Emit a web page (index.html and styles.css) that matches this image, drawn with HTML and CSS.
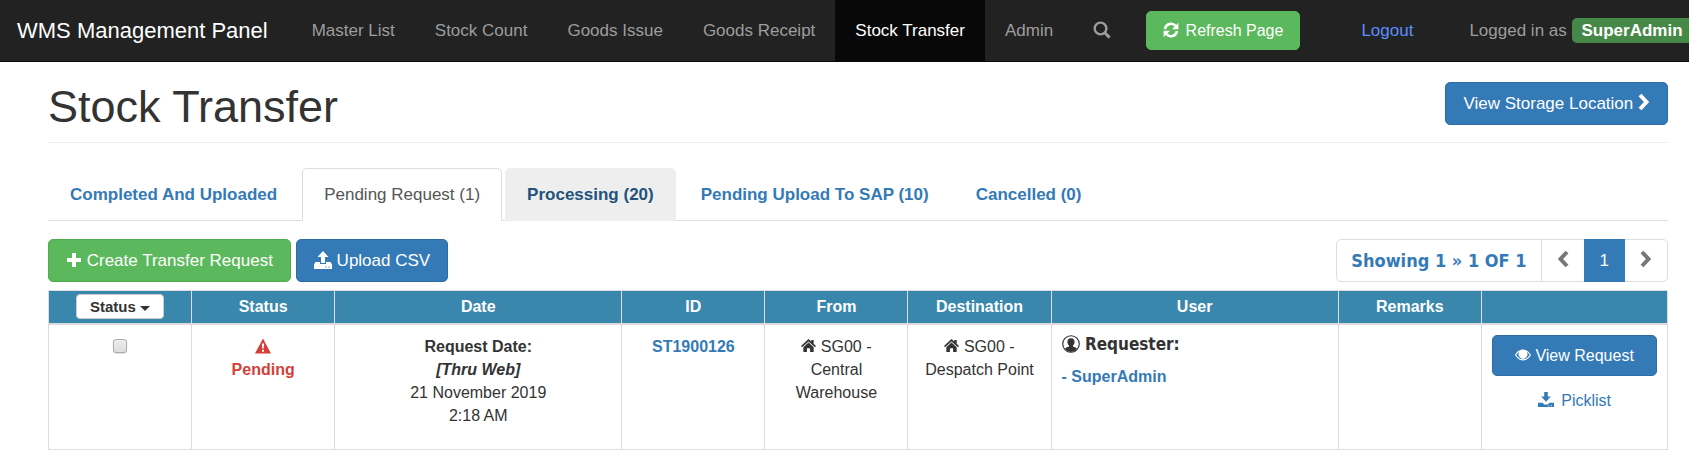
FILE: index.html
```html
<!DOCTYPE html>
<html lang="en">
<head>
    <meta charset="UTF-8">
    <title>Stock Transfer</title>
    <link rel="stylesheet" href="styles.css">
</head>
<body>
    <!-- Top navigation -->
    <nav class="navbar">
        <a class="brand" href="#">WMS Management Panel</a>
        <ul class="nav">
            <li><a href="#">Master List</a></li>
            <li><a href="#">Stock Count</a></li>
            <li><a href="#">Goods Issue</a></li>
            <li><a href="#">Goods Receipt</a></li>
            <li class="active"><a href="#">Stock Transfer</a></li>
            <li><a href="#">Admin</a></li>
            <li>
                <a href="#" aria-label="Search">
                    <svg class="icon icon-md" viewBox="0 0 16 16"><circle cx="6.7" cy="6.7" r="5.2" fill="none" stroke="currentColor" stroke-width="2.1"/><path d="M10.5 10.5l4.3 4.3" stroke="currentColor" stroke-width="2.6"/></svg>
                </a>
            </li>
        </ul>
        <button class="btn btn-refresh" type="button">
            <svg class="icon" viewBox="0 0 16 16"><path d="M2 7a6 6 0 0 1 10.6-3" fill="none" stroke="currentColor" stroke-width="2.5"/><path d="M15.4.8v6.4H9z"/><path d="M14 9a6 6 0 0 1-10.6 3" fill="none" stroke="currentColor" stroke-width="2.5"/><path d="M.6 15.2V8.800H7z"/></svg>
            Refresh Page
        </button>
        <a class="logout" href="#">Logout</a>
        <p class="logged-in">Logged in as <span class="user-label">SuperAdmin</span></p>
    </nav>

    <main class="content">
        <header class="page-header">
            <h1>Stock Transfer</h1>
            <button class="btn btn-primary" type="button">View Storage Location
                <svg class="icon icon-chevron" viewBox="0 0 12 18"><path d="M2 2l6.5 7L2 16" fill="none" stroke="currentColor" stroke-width="4"/></svg>
            </button>
        </header>

        <ul class="tabs">
            <li><a href="#">Completed And Uploaded</a></li>
            <li class="active"><a href="#">Pending Request (1)</a></li>
            <li class="hovered"><a href="#">Processing (20)</a></li>
            <li><a href="#">Pending Upload To SAP (10)</a></li>
            <li><a href="#">Cancelled (0)</a></li>
        </ul>

        <div class="toolbar">
            <button class="btn btn-success" type="button">
                <svg class="icon" viewBox="0 0 16 16"><path d="M6 1h4v5h5v4h-5v5H6v-5H1V6h5z"/></svg>
                Create Transfer Request
            </button>
            <button class="btn btn-primary" type="button">
                <svg class="icon icon-md" viewBox="0 0 18 18"><path d="M9 0l5.5 6H11v6H7V6H3.500z"/><path d="M1.500 11H6v2h6v-2h4.500l1.500 2.500V18H0v-4.500z"/><path d="M11.500 16h1.200M14.500 16h1.200" stroke="#337ab7"/></svg>
                Upload CSV
            </button>
            <ul class="pagination">
                <li class="showing"><a href="#">Showing 1 » 1 OF 1</a></li>
                <li><a href="#" aria-label="Previous"><svg class="icon icon-chevron" viewBox="0 0 12 18"><path d="M10 2L3.500 9l6.500 7" fill="none" stroke="currentColor" stroke-width="4"/></svg></a></li>
                <li class="active"><a href="#">1</a></li>
                <li><a href="#" aria-label="Next"><svg class="icon icon-chevron" viewBox="0 0 12 18"><path d="M2 2l6.500 7L2 16" fill="none" stroke="currentColor" stroke-width="4"/></svg></a></li>
            </ul>
        </div>

        <!-- Transfer requests -->
        <table class="requests">
            <colgroup>
                <col class="col-sm">
                <col class="col-sm">
                <col class="col-lg">
                <col class="col-sm">
                <col class="col-sm">
                <col class="col-sm">
                <col class="col-lg">
                <col class="col-sm">
                <col class="col-actions">
            </colgroup>
            <thead>
                <tr>
                    <th><button class="btn-status" type="button">Status <span class="caret"></span></button></th>
                    <th>Status</th>
                    <th>Date</th>
                    <th>ID</th>
                    <th>From</th>
                    <th>Destination</th>
                    <th>User</th>
                    <th>Remarks</th>
                    <th></th>
                </tr>
            </thead>
            <tbody>
                <tr>
                    <td><input type="checkbox" aria-label="Select ST1900126"></td>
                    <td class="pending">
                        <svg class="icon" viewBox="0 0 16 16"><path d="M8 .5l8 15H0z"/><path d="M6.800 5.500h2.400l-.5 5H7.300zM7 11.700h2v2H7z" fill="#fff"/></svg><br>
                        Pending
                    </td>
                    <td>
                        <strong>Request Date:<br><em>[Thru Web]</em></strong><br>
                        21 November 2019<br>
                        2:18 AM
                    </td>
                    <td><a class="request-id" href="#">ST1900126</a></td>
                    <td><svg class="icon icon-home" viewBox="0 0 16 16"><path d="M8 1l3 2.800V2h2.500v4.100L16 8.500l-1.100 1.300L8 3.600 1.100 9.800 0 8.500z"/><path d="M8 4.800l5.500 5V15H9.700v-4H6.300v4H2.500V9.800z"/></svg> SG00 - Central Warehouse</td>
                    <td><svg class="icon icon-home" viewBox="0 0 16 16"><path d="M8 1l3 2.800V2h2.500v4.100L16 8.500l-1.100 1.300L8 3.600 1.100 9.800 0 8.500z"/><path d="M8 4.800l5.500 5V15H9.700v-4H6.300v4H2.500V9.800z"/></svg> SG00 - Despatch Point</td>
                    <td class="user">
                        <div class="requester">
                            <svg class="icon icon-md" viewBox="0 0 20 20"><circle cx="10" cy="10" r="9.200" fill="none" stroke="currentColor" stroke-width="1.300"/><path d="M10 3.500c2.600 0 4 1.800 4 4.200 0 1.700-.8 3-1.800 3.900v1.200c1.700.6 3.600 1 4.500 2.500A8.800 8.800 0 0 1 10 19a8.800 8.800 0 0 1-6.700-3.700c.9-1.500 2.800-1.900 4.500-2.500v-1.200C6.800 10.700 6 9.400 6 7.700c0-2.400 1.400-4.200 4-4.200z"/></svg>
                            Requester:
                        </div>
                        <a href="#">- SuperAdmin</a>
                    </td>
                    <td></td>
                    <td>
                        <button class="btn btn-primary btn-view" type="button">
                            <svg class="icon" viewBox="0 0 16 16"><path d="M8 2.600c3.500 0 6.400 2.400 8 5.400-1.600 3-4.500 5.400-8 5.400S1.600 11 0 8c1.600-3 4.500-5.400 8-5.400zM4.500 4.700C3 5.500 2 6.700 1.300 8c1.400 2.400 3.800 4.200 6.700 4.200s5.300-1.800 6.700-4.200c-.7-1.300-1.700-2.500-3.200-3.300A4.400 4.400 0 1 1 4.500 4.700z" fill-rule="evenodd"/><circle cx="8" cy="7" r="3.600"/></svg>
                            View Request
                        </button>
                        <a class="picklist" href="#">
                            <svg class="icon" viewBox="0 0 18 18"><path d="M7 0h4v5h3.500L9 11 3.500 5H7z"/><path d="M0 12h5l2 2h4l2-2h5v5H0z"/><path d="M11.500 15.500h1.200M14.500 15.500h1.200" stroke="#fff"/></svg>
                            Picklist
                        </a>
                    </td>
                </tr>
            </tbody>
        </table>
    </main>
</body>
</html>
```

FILE: styles.css
```css
:root {
    --primary: #337ab7;
    --primary-border: #2e6da4;
    --success: #5cb85c;
    --line: #ddd;
    --text: #333;
    --radius: 5px;
}

* {
    box-sizing: border-box;
}

body {
    margin: 0;
    font-family: "Liberation Sans", Arial, sans-serif;
    font-size: 17px;
    line-height: 25px;
    color: var(--text);
    background: #fff;
    overflow-x: hidden;
}

a {
    color: var(--primary);
    text-decoration: none;
}

ul {
    list-style: none;
    margin: 0;
    padding: 0;
}

.icon {
    width: 16px;
    height: 16px;
    fill: currentColor;
    vertical-align: -2px;
}

.icon-md {
    width: 18px;
    height: 18px;
    vertical-align: -3px;
}

.icon-chevron {
    width: 12px;
    height: 18px;
}

/* Navbar */
.navbar {
    display: flex;
    align-items: center;
    height: 62px;
    padding-left: 17px;
    background: #222;
    border-bottom: 1px solid #080808;
    white-space: nowrap;
    overflow: hidden;
}

.brand {
    margin-right: 24px;
    font-size: 22px;
    color: #fff;
}

.nav {
    display: flex;
}

.nav a {
    display: block;
    padding: 18px 20px;
    color: #9d9d9d;
}

.nav .active a {
    color: #fff;
    background: #080808;
}

.logout {
    margin-left: 61px;
    color: #5c8dff;
}

.logged-in {
    flex: none;
    margin: 0 0 0 56px;
    color: #9d9d9d;
}

.user-label {
    display: inline-block;
    padding: 0 10px;
    font-weight: bold;
    color: #fff;
    background: #468847;
    border-radius: var(--radius);
}

/* Buttons */
.btn {
    padding: 8px 17px;
    font-family: inherit;
    font-size: 17px;
    line-height: 25px;
    color: #fff;
    border: 1px solid;
    border-radius: var(--radius);
    cursor: pointer;
}

.btn-primary {
    background: var(--primary);
    border-color: var(--primary-border);
}

.btn-success {
    background: var(--success);
    border-color: #4cae4c;
}

.btn-refresh {
    margin-left: 15px;
    padding: 6px 16px;
    font-size: 16px;
    background: var(--success);
    border-color: var(--success);
}

.btn-refresh .icon {
    margin-right: 2px;
}

/* Page */
.content {
    padding: 20px 21px 18px 48px;
}

.page-header {
    display: flex;
    justify-content: space-between;
    align-items: flex-start;
    height: 61px;
    border-bottom: 1px solid #eee;
}

h1 {
    margin: 0;
    font-size: 45px;
    font-weight: normal;
    line-height: 50px;
}

/* Tabs */
.tabs {
    display: flex;
    gap: 3px;
    margin-top: 25px;
    border-bottom: 1px solid var(--line);
}

.tabs a {
    display: block;
    margin-bottom: -1px;
    padding: 13px 21px;
    font-weight: bold;
    border: 1px solid transparent;
    border-radius: var(--radius) var(--radius) 0 0;
}

.tabs .active a {
    font-weight: normal;
    color: #555;
    background: #fff;
    border-color: var(--line) var(--line) #fff;
}

.tabs .hovered a {
    color: #23527c;
    background: #eee;
}

.toolbar {
    display: flex;
    gap: 5px;
    margin: 18px 0 8px;
}

.pagination {
    display: flex;
    margin-left: auto;
    border: 1px solid var(--line);
    border-radius: var(--radius);
}

.pagination a {
    display: block;
    padding: 8px 15px;
    color: #777;
}

.pagination .showing {
    border-right: 1px solid var(--line);
}

.pagination .showing a {
    padding: 8px 14px;
    font-family: "DejaVu Sans Condensed", "DejaVu Sans", sans-serif;
    font-size: 18px;
    font-weight: bold;
    color: var(--primary);
}

.pagination .active {
    margin: -1px 0;
    padding: 1px 0;
    background: var(--primary);
}

.pagination .active a {
    padding: 8px 16px;
    color: #fff;
}

/* Table */
.requests {
    width: 100%;
    table-layout: fixed;
    border-collapse: collapse;
    font-size: 16px;
    line-height: 23px;
    text-align: center;
}

.col-sm {
    width: 143px;
}

.col-lg {
    width: 287px;
}

.col-actions {
    width: 186px;
}

th,
td {
    border: 1px solid var(--line);
}

th {
    height: 33px;
    padding: 3px;
    color: #fff;
    background: #3a87ad;
    border-bottom-width: 2px;
}

td {
    height: 126px;
    padding: 10px;
    vertical-align: top;
}

.btn-status {
    padding: 0 13px;
    font-family: inherit;
    font-size: 15px;
    font-weight: bold;
    line-height: 23px;
    color: var(--text);
    background: #fff;
    border: 1px solid #ccc;
    border-radius: 4px;
    vertical-align: top;
}

.caret {
    display: inline-block;
    vertical-align: middle;
    border-top: 5px solid;
    border-left: 5px solid transparent;
    border-right: 5px solid transparent;
}

input[type="checkbox"] {
    appearance: none;
    width: 14px;
    height: 14px;
    margin: 4px 0 0;
    background: linear-gradient(#eee, #ddd);
    border: 1px solid #aaa;
    border-radius: 3px;
    box-shadow: 0 1px 1px #ddd;
}

.pending {
    font-weight: bold;
    color: #d43f3a;
}

.request-id {
    font-weight: bold;
}

.icon-home {
    width: 15px;
    height: 15px;
    vertical-align: -1px;
}

.user {
    text-align: left;
    font-weight: bold;
}

.requester {
    margin-bottom: 11px;
    font-family: "DejaVu Sans Condensed", "DejaVu Sans", sans-serif;
    font-size: 17px;
    line-height: 19px;
}

.btn-view {
    width: 100%;
    padding: 7px;
    font-size: 16px;
}

.picklist {
    display: block;
    margin-top: 13px;
}

.picklist .icon {
    margin-right: 3px;
}
```
